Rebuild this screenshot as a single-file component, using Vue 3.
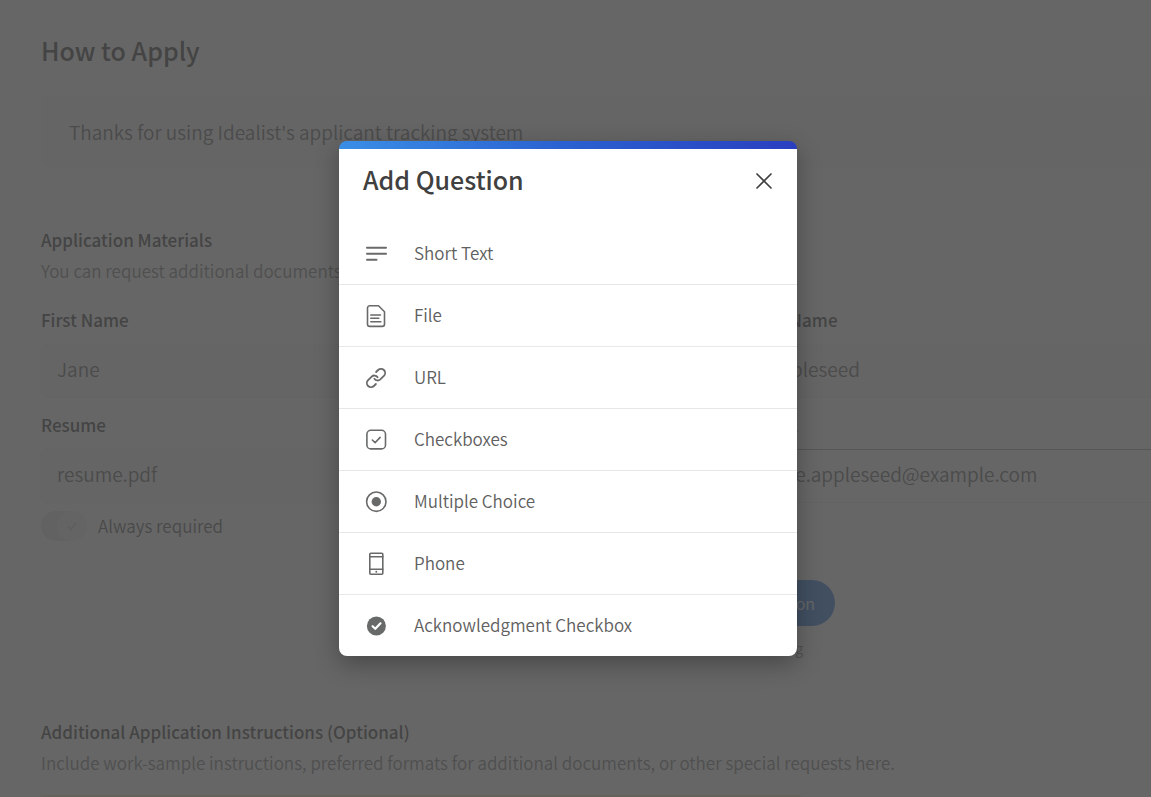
<script setup>
const options = [
  { id: 'short', label: 'Short Text' },
  { id: 'file', label: 'File' },
  { id: 'url', label: 'URL' },
  { id: 'checkboxes', label: 'Checkboxes' },
  { id: 'choice', label: 'Multiple Choice' },
  { id: 'phone', label: 'Phone' },
  { id: 'ack', label: 'Acknowledgment Checkbox' },
]
</script>

<template>
  <div class="screen">
    <main class="page">
      <h1>How to Apply</h1>
      <p class="notice">Thanks for using Idealist's applicant tracking system</p>

      <section class="materials">
        <h2>Application Materials</h2>
        <p class="hint">You can request additional documents</p>
        <div class="fields">
          <div class="field">
            <label for="first">First Name</label>
            <input id="first" type="text" value="Jane" disabled />
          </div>
          <div class="field">
            <label for="last">Last Name</label>
            <input id="last" type="text" value="Appleseed" disabled />
          </div>
          <div class="field">
            <label for="resume">Resume</label>
            <input id="resume" type="text" value="resume.pdf" disabled />
            <label class="toggle">
              <input type="checkbox" checked disabled />
              <span class="track">
                <span class="knob">
                  <svg viewBox="0 0 16 16" width="16" height="16"><path d="M4 8.500l3 3 5-6.500" /></svg>
                </span>
              </span>
              Always required
            </label>
          </div>
          <div class="field">
            <label for="email">Email</label>
            <input id="email" class="open" type="text" value="jane.appleseed@example.com" />
          </div>
        </div>
        <div class="add">
          <button type="button" class="pill">Add Question</button>
          <p>10 fields remaining</p>
        </div>
      </section>

      <section class="extra">
        <h2>Additional Application Instructions (Optional)</h2>
        <p class="hint">Include work-sample instructions, preferred formats for additional documents, or other special requests here.</p>
        <div class="editor"></div>
      </section>
    </main>

    <div class="overlay">
      <div class="modal" role="dialog" aria-modal="true" aria-labelledby="modal-title">
        <header>
          <h2 id="modal-title">Add Question</h2>
          <button type="button" class="close" aria-label="Close">
            <svg viewBox="0 0 18 18" width="18" height="18"><path d="M2 2l14 14M16 2L2 16" /></svg>
          </button>
        </header>
        <ul>
          <li v-for="o in options" :key="o.id">
            <button type="button" class="option">
              <svg class="icon" viewBox="0 -2 24 28" width="24" height="28" aria-hidden="true">
                <path v-if="o.id === 'short'" class="bold" d="M3 6.700h19M3 12.700h19M3 18.700h9.500" />
                <template v-else-if="o.id === 'file'">
                  <path d="M5.700 2.800h8.800l6 6v12.400a2.200 2.200 0 0 1-2.200 2.200H5.700a2.200 2.200 0 0 1-2.200-2.200V5a2.200 2.200 0 0 1 2.200-2.200z" />
                  <path d="M6.800 12h9.700M6.800 15.300h8M6.800 18.700h10" />
                </template>
                <g v-else-if="o.id === 'url'" class="link">
                  <path d="M10.400 13.800a3.900 3.900 0 0 0 5.900.6l3.600-3.600a4.100 4.100 0 0 0-5.800-5.800l-2 2" />
                  <path d="M13.600 12.200a3.900 3.900 0 0 0-5.900-.6l-3.600 3.600a4.100 4.100 0 0 0 5.800 5.800l2-2" />
                </g>
                <template v-else-if="o.id === 'checkboxes'">
                  <rect x="2.900" y="3.300" width="18.600" height="18.600" rx="4" />
                  <path d="M8.300 13l2.800 2.700 5-5.300" />
                </template>
                <template v-else-if="o.id === 'choice'">
                  <circle cx="12.300" cy="12.700" r="9.700" />
                  <circle class="solid" cx="12.300" cy="12.700" r="4.700" />
                </template>
                <template v-else-if="o.id === 'phone'">
                  <rect x="5.800" y="2.200" width="13" height="21" rx="1" />
                  <path d="M5.800 5.700h13M5.800 18.300h13" />
                  <circle class="solid" cx="12.300" cy="20.800" r="1" />
                </template>
                <template v-else>
                  <circle class="solid" cx="12.400" cy="13" r="9.500" />
                  <path class="tick" d="M8.600 13.200l2.700 2.600 5.200-5.500" />
                </template>
              </svg>
              {{ o.label }}
            </button>
          </li>
        </ul>
      </div>
    </div>
  </div>
</template>

<style>
body {
  margin: 0;
}
</style>

<style scoped>
.screen {
  position: relative;
  height: 100vh;
  overflow: hidden;
  background: #fff;
  color: #404040;
  font-family: "Noto Sans CJK SC", "Open Sans", sans-serif;
  font-size: 17px;
  font-weight: 350;
  line-height: 24px;
}
h1, h2, p, ul {
  margin: 0;
  padding: 0;
}
h1 {
  font-size: 25px;
  line-height: 32px;
  font-weight: 500;
}
h2, .field > label:first-child {
  font-size: 17px;
  line-height: 24px;
  font-weight: 500;
}
button, input {
  font: inherit;
  color: inherit;
}
.page {
  box-sizing: border-box;
  width: calc(100% + 333px);
  padding: 34px 41px 0;
  color: #545454;
}
.notice {
  margin-top: 29px;
  padding: 23px 28px 21px;
  border-radius: 8px;
  background: #f8f8f8;
  color: #787878;
  font-size: 19px;
  line-height: 28px;
}
.materials {
  margin-top: 61px;
}
.hint {
  margin-top: 7px;
  color: #8c8c8c;
}
.fields {
  display: grid;
  grid-template-columns: 1fr 1fr;
  gap: 15px 20px;
  margin-top: 25px;
}
.field {
  display: flex;
  flex-direction: column;
}
.field > input {
  box-sizing: border-box;
  width: 100%;
  height: 54px;
  margin-top: 12px;
  padding: 0 15px 5px;
  border: 1px solid #f4f4f4;
  border-radius: 6px;
  background: #f8f8f8;
  font-size: 19px;
  color: #787878;
}
.field > input.open {
  border-color: #b0b0b0 #fff #f0f0f0;
  background: #fff;
}
.toggle {
  display: flex;
  align-items: center;
  gap: 11px;
  margin-top: 8px;
  color: #707070;
}
.toggle input {
  position: absolute;
  opacity: 0;
}
.track {
  display: flex;
  justify-content: flex-end;
  width: 46px;
  height: 30px;
  border-radius: 15px;
  background: #e8e8e8;
}
.knob {
  display: grid;
  place-items: center;
  width: 30px;
  height: 30px;
  border-radius: 50%;
  background: #f6f6f6;
}
.knob svg {
  fill: none;
  stroke: #d8d8d8;
  stroke-width: 2;
}
.add {
  margin-top: 39px;
  text-align: center;
}
.pill {
  height: 46px;
  padding: 0 20px;
  min-width: 186px;
  border: 0;
  border-radius: 23px;
  background: #468ce6;
  color: #fff;
  font-size: 16px;
  text-align: right;
}
.add p {
  margin-top: 10px;
  color: #8c8c8c;
  font-size: 14px;
}
.extra {
  margin-top: 60px;
}
.editor {
  height: 60px;
  width: 760px;
  margin-top: 20px;
  border-top: 3px solid #f6ecc8;
}
.overlay {
  position: absolute;
  inset: 0;
  display: flex;
  align-items: center;
  justify-content: center;
  padding-right: 15px;
  background: rgba(64, 64, 64, 0.8);
}
.modal {
  width: 458px;
  border-radius: 8px;
  overflow: hidden;
  background: linear-gradient(90deg, #3a8ee6, #2a60d0 50%, #2a3fc0) top / 100% 8px no-repeat #fff;
  box-shadow: 0 8px 24px rgba(0, 0, 0, 0.3);
}
.modal header {
  display: flex;
  align-items: center;
  justify-content: space-between;
  height: 64px;
  padding: 8px 24px 10px;
}
.modal h2 {
  padding-bottom: 4px;
  font-size: 25px;
  line-height: 32px;
}
.close {
  display: grid;
  place-items: center;
  width: 18px;
  height: 18px;
  padding: 0;
  border: 0;
  background: none;
}
.close svg {
  fill: none;
  stroke: #404040;
  stroke-width: 1.700;
  stroke-linecap: round;
}
.modal ul {
  list-style: none;
}
.modal li + li {
  border-top: 1px solid #e6e8e8;
}
.option {
  display: flex;
  align-items: center;
  gap: 26px;
  width: 100%;
  height: 61px;
  padding: 0 25px 1px;
  border: 0;
  background: none;
  color: #606060;
  text-align: left;
}
.icon {
  fill: none;
  stroke: #686a6a;
  stroke-width: 1.600;
  stroke-linecap: round;
  stroke-linejoin: round;
}
.icon .bold {
  stroke-width: 2;
}
.icon .link {
  stroke-width: 1.800;
}
.icon .solid {
  fill: #686a6a;
  stroke: none;
}
.icon .tick {
  stroke: #fff;
  stroke-width: 2.200;
}
</style>
